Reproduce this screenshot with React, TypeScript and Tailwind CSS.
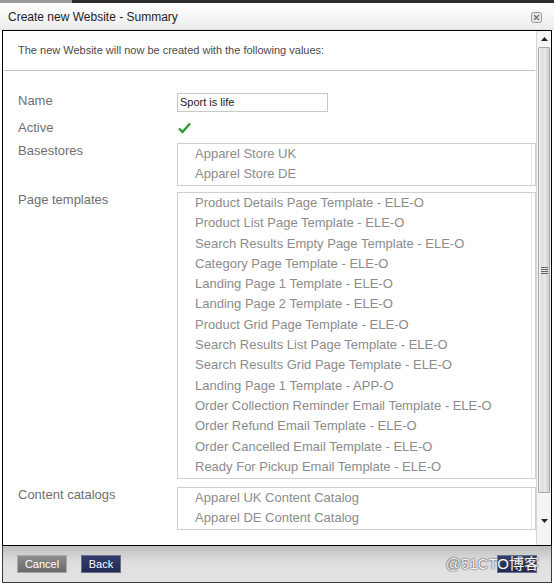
import React from 'react';

const baseStores = ['Apparel Store UK', 'Apparel Store DE'];

const pageTemplates = [
  'Product Details Page Template - ELE-O',
  'Product List Page Template - ELE-O',
  'Search Results Empty Page Template - ELE-O',
  'Category Page Template - ELE-O',
  'Landing Page 1 Template - ELE-O',
  'Landing Page 2 Template - ELE-O',
  'Product Grid Page Template - ELE-O',
  'Search Results List Page Template - ELE-O',
  'Search Results Grid Page Template - ELE-O',
  'Landing Page 1 Template - APP-O',
  'Order Collection Reminder Email Template - ELE-O',
  'Order Refund Email Template - ELE-O',
  'Order Cancelled Email Template - ELE-O',
  'Ready For Pickup Email Template - ELE-O',
];

const contentCatalogs = ['Apparel UK Content Catalog', 'Apparel DE Content Catalog'];

function ListBox({ items, tight }: { items: string[]; tight?: boolean }) {
  return (
    <div className="flex border border-[#cfcfcf] bg-white">
      <div className={`flex-1 pl-[17px] ${tight ? 'leading-[20.3px]' : 'leading-[20px]'} pb-[1px]`}>
        {items.map((item, i) => (
          <div key={i} className="text-[13px] text-[#8c8c8c] whitespace-nowrap">
            {item}
          </div>
        ))}
      </div>
      <div className="w-[4px] border-l border-[#ececec]" />
    </div>
  );
}

function Row({ label, children, className }: { label: string; children: React.ReactNode; className?: string }) {
  return (
    <div className={`flex ${className ?? ''}`}>
      <div className="w-[159px] shrink-0 text-[13px] leading-[15px] text-[#707070]">{label}</div>
      <div className="flex-1">{children}</div>
    </div>
  );
}

function Scrollbar() {
  return (
    <div className="w-[15px] shrink-0 flex flex-col bg-[#f4f4f4] border-l border-[#d6d6d6]">
      <div className="h-[16px] flex items-center justify-center">
        <svg width="7" height="4" viewBox="0 0 7 4">
          <path d="M0 4 L3.5 0 L7 4 Z" fill="#222" />
        </svg>
      </div>
      <div className="h-[446px] mx-[1px] border border-[#a9a9a9] rounded-[1px] bg-[linear-gradient(to_right,#f2f2f2,#dcdcdc_30%,#e9e9e9_55%,#cfcfcf)] flex items-center justify-center">
        <div className="flex flex-col gap-[1px]">
          <div className="w-[7px] h-[1px] bg-[#666]" />
          <div className="w-[7px] h-[1px] bg-[#666]" />
          <div className="w-[7px] h-[1px] bg-[#666]" />
          <div className="w-[7px] h-[1px] bg-[#666]" />
        </div>
      </div>
      <div className="flex-1" />
      <div className="h-[16px] flex items-center justify-center mb-[16px]">
        <svg width="7" height="4" viewBox="0 0 7 4">
          <path d="M0 0 L3.5 4 L7 0 Z" fill="#222" />
        </svg>
      </div>
    </div>
  );
}

export default function App() {
  return (
    <div
      className="w-[554px] h-[583px] flex flex-col bg-white overflow-hidden"
      style={{ fontFamily: '"Liberation Sans", Arial, "Noto Sans CJK SC", sans-serif' }}
    >
      {/* top strip */}
      <div className="h-[3px] flex">
        <div className="w-[72px] bg-[#9a9a9a]" />
        <div className="flex-1 bg-[#2e2e2e]" />
      </div>

      {/* title bar */}
      <div className="h-[27px] flex items-center justify-between pl-[8px] pr-[12px] pt-[2px] bg-[linear-gradient(to_bottom,#ffffff,#ececec)] border-b border-[#e2e2e2]">
        <span className="text-[12px] text-[#1e1e1e]">Create new Website - Summary</span>
        <svg width="11" height="11" viewBox="0 0 11 11">
          <rect x="0.5" y="0.5" width="10" height="10" rx="2" fill="#e8e8e8" stroke="#9a9a9a" />
          <path d="M3 3 L8 8 M8 3 L3 8" stroke="#7a7a7a" strokeWidth="1.6" />
        </svg>
      </div>

      {/* content panel */}
      <div className="mx-[2px] h-[516px] border border-black flex">
        <div className="flex-1 flex flex-col">
          <div className="h-[40px] flex items-center pl-[14px] border-b border-[#c4c4c4] mx-[1px]">
            <span className="text-[11px] text-[#4a4a4a]">The new Website will now be created with the following values:</span>
          </div>
          <div className="pl-[15px]">
            <Row label="Name" className="mt-[22px]">
              <div className="w-[151px] h-[19px] border border-[#c9c9c9] flex items-center pl-[2px] text-[11px] text-[#222]">
                Sport is life
              </div>
            </Row>
            <Row label="Active" className="mt-[8px]">
              <div className="h-[15px] flex items-center pl-[1px]">
                <svg width="13" height="12" viewBox="0 0 13 12">
                  <path d="M1 6.5 L4.5 10 L12 1.5" fill="none" stroke="#2e9a2e" strokeWidth="2.4" />
                </svg>
              </div>
            </Row>
            <Row label="Basestores" className="mt-[8px]">
              <ListBox items={baseStores} />
            </Row>
            <Row label="Page templates" className="mt-[6px]">
              <ListBox items={pageTemplates} tight />
            </Row>
            <Row label="Content catalogs" className="mt-[8px]">
              <ListBox items={contentCatalogs} />
            </Row>
          </div>
        </div>
        <Scrollbar />
      </div>

      {/* footer */}
      <div className="relative mx-[2px] flex-1 border-x border-b border-[#3a3a3a] bg-[linear-gradient(to_bottom,#bfbfbf,#dedede_45%,#e4e4e4)] flex items-center px-[14px]">
        <button className="w-[50px] h-[18px] border border-[#a8a8a8] bg-[linear-gradient(to_bottom,#8c8c8c,#6a6a6a)] text-white text-[11px] leading-none">
          Cancel
        </button>
        <button className="ml-[14px] w-[40px] h-[18px] border border-[#6a6f8c] bg-[linear-gradient(to_bottom,#333c6c,#222a55)] text-white text-[11px] leading-none">
          Back
        </button>
        <div className="flex-1" />
        <div className="w-[40px] h-[18px] border border-[#6a6f8c] bg-[linear-gradient(to_bottom,#333c6c,#222a55)]" />
        <span className="absolute right-[12px] top-[7px] text-[15px] text-[#f4f4f4] [text-shadow:0_0_2px_#444,0_0_1px_#444]">
          @51CTO博客
        </span>
      </div>
    </div>
  );
}
